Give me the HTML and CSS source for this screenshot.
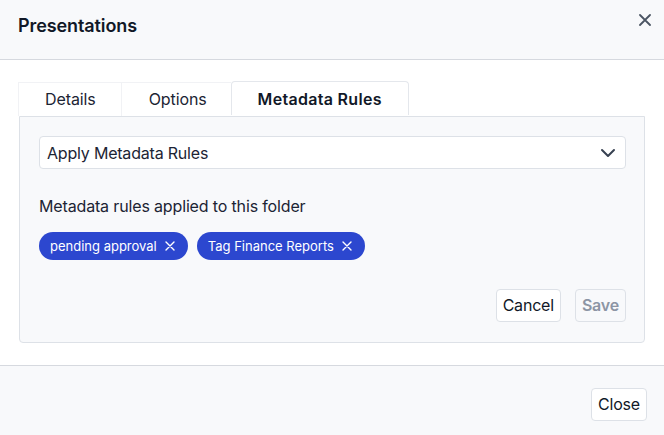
FILE: index.html
```html
<!DOCTYPE html>
<html>
<head>
<meta charset="utf-8">
<link rel="stylesheet" href="styles.css">
</head>
<body>
<div class="dialog">
  <div class="header">
    <div class="title">Presentations</div>
    <button class="x-btn" aria-label="Close">
      <svg width="12" height="12" viewBox="0 0 12 12"><path d="M1 1L11 11M11 1L1 11" stroke="#4b5563" stroke-width="1.8" stroke-linecap="round"/></svg>
    </button>
  </div>
  <div class="body">
    <div class="tabs">
      <div class="tab">Details</div>
      <div class="tab">Options</div>
      <div class="tab active">Metadata Rules</div>
    </div>
    <div class="panel">
      <div class="select">
        <span>Apply Metadata Rules</span>
        <svg width="16" height="10" viewBox="0 0 16 10"><path d="M2 2L8 8L14 2" fill="none" stroke="#374151" stroke-width="2" stroke-linecap="round" stroke-linejoin="round"/></svg>
      </div>
      <div class="label">Metadata rules applied to this folder</div>
      <div class="chips">
        <span class="chip">pending approval <svg class="cx" width="10" height="10" viewBox="0 0 10 10"><path d="M1 1L9 9M9 1L1 9" stroke="#fff" stroke-width="1.4" stroke-linecap="round"/></svg></span>
        <span class="chip">Tag Finance Reports <svg class="cx" width="10" height="10" viewBox="0 0 10 10"><path d="M1 1L9 9M9 1L1 9" stroke="#fff" stroke-width="1.4" stroke-linecap="round"/></svg></span>
      </div>
      <div class="actions">
        <button class="btn">Cancel</button>
        <button class="btn disabled">Save</button>
      </div>
    </div>
  </div>
  <div class="footer">
    <button class="btn">Close</button>
  </div>
</div>
</body>
</html>
```
FILE: styles.css
```css
* { box-sizing: border-box; }
html, body { margin: 0; padding: 0; background: #fff; }
body { font-family: Inter, "Noto Sans", sans-serif; color: #1c2434; }
.dialog { width: 664px; height: 435px; display: flex; flex-direction: column; }
.header {
  height: 60px; background: #f8f9fb; border-bottom: 1px solid #d6d9df;
  display: flex; justify-content: space-between; align-items: flex-start;
  padding: 14px 12px 0 18px;
}
.title { font-size: 18px; font-weight: 600; line-height: 24px; color: #111827; letter-spacing: -0.1px; }
.x-btn { border: 0; background: none; padding: 0; margin-top: -1px; width: 14px; height: 14px; display: flex; align-items: center; justify-content: center; }
.body { padding: 22px 19px 0 18px; }
.tabs { display: flex; height: 34px; }
.tab {
  font-size: 16px; line-height: 32px; padding: 0 25px 0 26px; background: #fff;
  border: 1px solid #f1f2f5; border-bottom: 0; border-right: 0; color: #1c2434;
  letter-spacing: -0.1px;
}
.tab:nth-child(2) { padding: 0 24px 0 27px; }
.tab.active {
  font-weight: 600; border: 1px solid #e4e7ec; border-bottom: 0; border-radius: 4px 4px 0 0;
  padding: 0 26px 0 26px; height: 34px; margin-top: -1px; line-height: 34px; color: #111827;
  letter-spacing: 0.3px;
}
.panel {
  margin-left: 1px; background: #f8f9fb; border: 1px solid #dde1e7; border-radius: 0 0 4px 4px;
  padding: 19px 18px 19px 19px; height: 227px;
}
.select {
  height: 33px; background: #fff; border: 1px solid #dde1e7; border-radius: 4px;
  display: flex; align-items: center; justify-content: space-between; padding: 0 9px 0 7px;
  font-size: 16px; letter-spacing: -0.2px;
}
.label { font-size: 16px; line-height: 24px; margin-top: 25px; letter-spacing: -0.15px; }
.chips { display: flex; gap: 9px; margin-top: 14px; }
.chip {
  background: #2c47cf; color: #fff; font-size: 13px; height: 28px; border-radius: 14px;
  display: inline-flex; align-items: center; padding: 0 13px 0 11px; gap: 8px;
}
.actions { display: flex; justify-content: flex-end; gap: 14px; margin-top: 29px; }
.btn {
  font-family: Inter, "Noto Sans", sans-serif; font-size: 16px; color: #111827; background: #fff;
  border: 1px solid #dde1e7; border-radius: 4px; height: 33px; padding: 0 6px; line-height: 31px;
  letter-spacing: -0.2px;
}
.btn.disabled { color: #8c95a4; font-weight: 600; background: #f8f9fb; padding: 0 6px; }
.footer {
  margin-top: 22px; flex: 1; background: #f8f9fb; border-top: 1px solid #d6d9df;
  display: flex; justify-content: flex-end; align-items: flex-start; padding: 22px 17px 0 0;
}
```
